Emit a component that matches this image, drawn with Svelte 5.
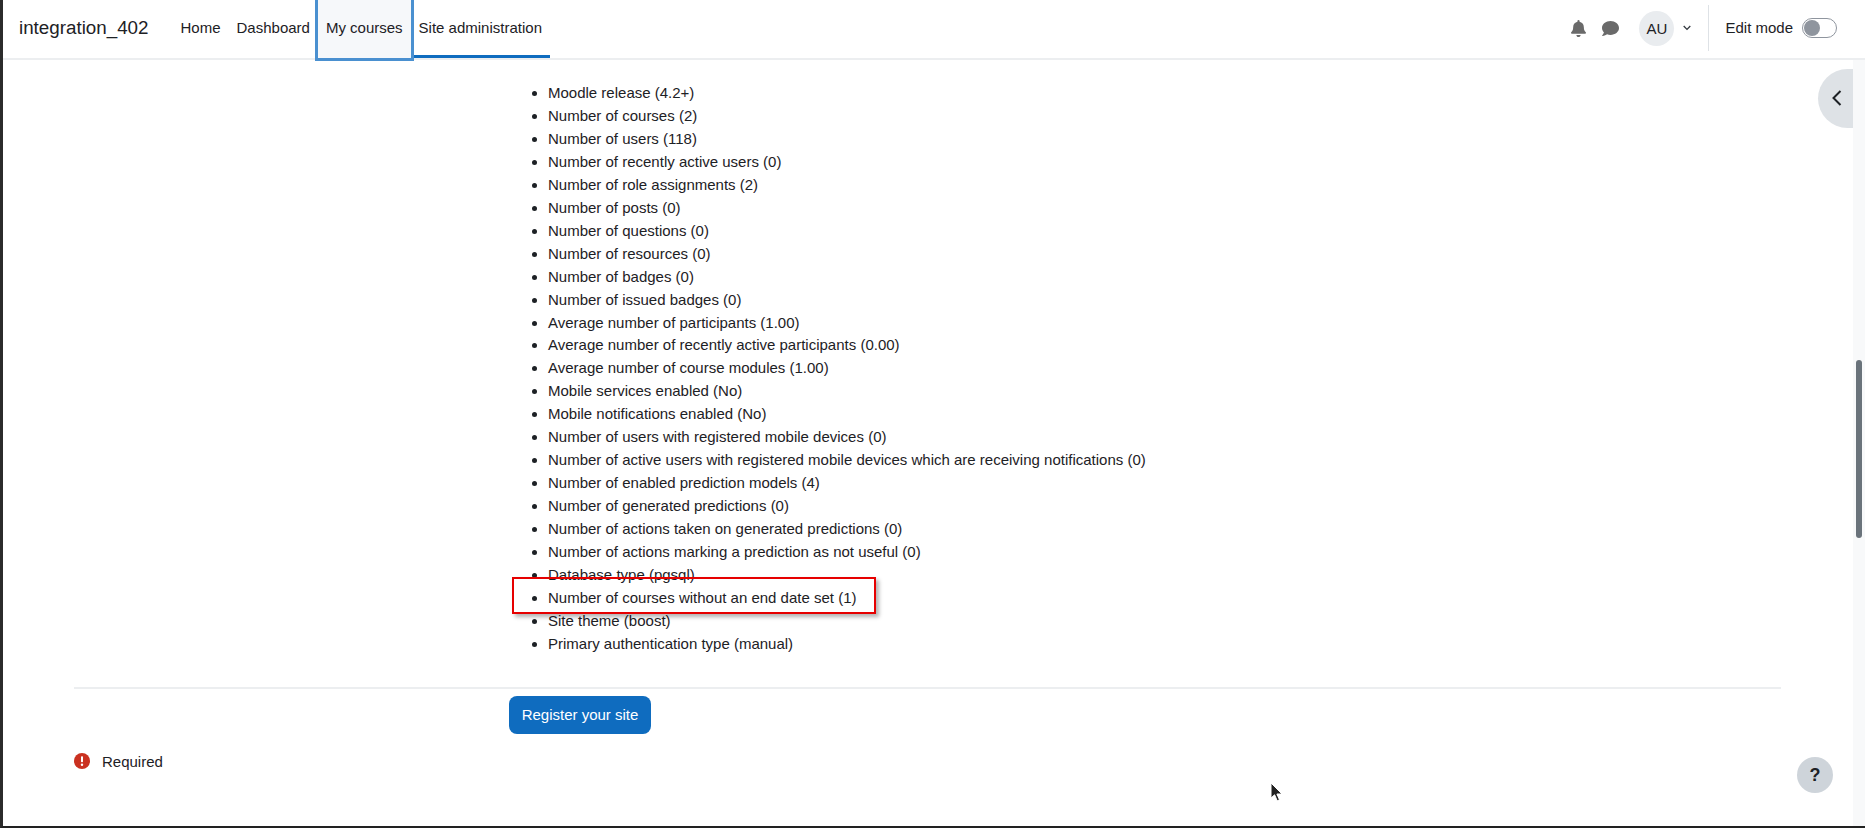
<script lang="ts">
	const items = [
		'Moodle release (4.2+)',
		'Number of courses (2)',
		'Number of users (118)',
		'Number of recently active users (0)',
		'Number of role assignments (2)',
		'Number of posts (0)',
		'Number of questions (0)',
		'Number of resources (0)',
		'Number of badges (0)',
		'Number of issued badges (0)',
		'Average number of participants (1.00)',
		'Average number of recently active participants (0.00)',
		'Average number of course modules (1.00)',
		'Mobile services enabled (No)',
		'Mobile notifications enabled (No)',
		'Number of users with registered mobile devices (0)',
		'Number of active users with registered mobile devices which are receiving notifications (0)',
		'Number of enabled prediction models (4)',
		'Number of generated predictions (0)',
		'Number of actions taken on generated predictions (0)',
		'Number of actions marking a prediction as not useful (0)',
		'Database type (pgsql)',
		'Number of courses without an end date set (1)',
		'Site theme (boost)',
		'Primary authentication type (manual)'
	];
	const links = ['Home', 'Dashboard', 'My courses', 'Site administration'];
</script>

<div class="screen">
	<header class="navbar">
		<span class="brand">integration_402</span>
		<nav class="links">
			{#each links as link}
				<span class="link" class:focused={link === 'My courses'} class:active={link === 'Site administration'}>{link}</span>
			{/each}
		</nav>
		<div class="right">
			<svg class="icon bell" width="15" height="17" viewBox="0 0 448 512"><path d="M224 512c35 0 64-29 64-64H160c0 35 29 64 64 64zm215-150c-19-21-55-52-55-154 0-78-54-140-128-155V32a32 32 0 1 0-64 0v21C118 68 64 130 64 208c0 102-36 133-55 154-6 6-9 14-9 22 0 16 13 32 32 32h384c19 0 32-16 32-32 0-8-3-16-9-22z"/></svg>
			<svg class="icon chat" width="17" height="17" viewBox="0 0 512 512"><path d="M256 32C115 32 0 125 0 240c0 50 22 95 58 131-13 50-54 94-55 95-2 2-3 6-2 9 2 3 4 5 8 5 67 0 117-32 143-52 32 12 67 20 104 20 141 0 256-93 256-208S397 32 256 32z"/></svg>
			<span class="avatar">AU</span>
			<svg class="caret" width="8" height="6" viewBox="0 0 8 6"><path d="M.7 1 4 4.4 7.3 1" /></svg>
			<span class="divider"></span>
			<span class="edit">Edit mode</span>
			<span class="switch"><span class="knob"></span></span>
		</div>
	</header>

	<main class="page">
		<div class="content">
			<ul class="stats">
				{#each items as item}
					<li>{item}</li>
				{/each}
			</ul>
			<hr />
			<div class="actions">
				<button class="primary">Register your site</button>
			</div>
			<div class="required">
				<svg width="16" height="16" viewBox="0 0 16 16"><circle cx="8" cy="8" r="8" fill="#ca3120" /><rect x="7" y="3.2" width="2" height="6" rx="0.8" fill="#fff" /><circle cx="8" cy="11.7" r="1.2" fill="#fff" /></svg>
				<span>Required</span>
			</div>
		</div>
		<div class="gutter"><span class="thumb"></span></div>
	</main>

	<div class="highlight"></div>
	<button class="drawer" aria-label="Open drawer">
		<svg width="10" height="16" viewBox="0 0 10 16"><path d="M8.5 1 1.5 8l7 7" /></svg>
	</button>
	<button class="help">?</button>
	<svg class="cursor" width="14" height="20" viewBox="0 0 14 20"><path d="M1 1v15l3.6-3.2 2.6 6 2.3-1-2.6-5.8H12z" /></svg>
</div>

<style>
	:global(body) {
		margin: 0;
		overflow: hidden;
	}

	.screen {
		position: relative;
		width: 1865px;
		height: 828px;
		overflow: hidden;
		background: #fff;
		box-sizing: border-box;
		border-left: 3px solid #2b2b2b;
		border-bottom: 2px solid #222;
		font-family: 'Liberation Sans', Arial, sans-serif;
		font-size: 15px;
		color: #1d2125;
	}

	.navbar {
		height: 58px;
		display: flex;
		align-items: center;
		padding: 0 28px 0 16px;
		background: #fff;
		border-bottom: 2px solid #eceef0;
		position: relative;
		z-index: 2;
	}

	.brand {
		font-size: 18.8px;
		margin-right: 24px;
		padding-bottom: 2px;
	}

	.links {
		display: flex;
		align-self: stretch;
	}

	.link {
		display: flex;
		align-items: center;
		padding: 0 8px 3px;
		height: 58px;
		box-sizing: border-box;
	}

	.focused {
		position: relative;
		z-index: 1;
		background: #f6f8fa;
		outline: 3px solid #4a90d0;
	}

	.active {
		border-bottom: 3px solid #0f6cbf;
		padding-bottom: 0;
	}

	.right {
		margin-left: auto;
		display: flex;
		align-items: center;
		padding-bottom: 2px;
	}

	.icon {
		fill: #6a6a6a;
	}

	.bell {
		margin-right: 16px;
	}

	.chat {
		margin-right: 20px;
	}

	.avatar {
		width: 35px;
		height: 35px;
		border-radius: 50%;
		background: #e9ecef;
		display: flex;
		align-items: center;
		justify-content: center;
		margin-right: 9px;
	}

	.caret {
		fill: none;
		stroke: #343a40;
		stroke-width: 1.3;
		margin-right: 17px;
	}

	.divider {
		width: 1px;
		height: 46px;
		background: #dee2e6;
		margin-right: 16px;
	}

	.edit {
		padding-bottom: 2px;
	}

	.switch {
		width: 35px;
		height: 20px;
		margin-left: 9px;
		border: 1px solid #8f959e;
		border-radius: 10px;
		box-sizing: border-box;
		display: flex;
		align-items: center;
		padding-left: 1px;
	}

	.knob {
		width: 16px;
		height: 16px;
		border-radius: 50%;
		background: #8f959e;
	}

	.page {
		display: flex;
		height: 766px;
	}

	.content {
		flex: 1;
		padding: 22px 72px 0 71px;
		background: #fff;
	}

	.stats {
		margin: 0 0 31px;
		padding: 0 0 0 474px;
		line-height: 22.95px;
		font-size: 15px;
	}

	hr {
		border: none;
		border-top: 2px solid #eceef0;
		margin: 0;
	}

	.actions {
		display: flex;
		padding: 7px 0 0 435px;
	}

	.primary {
		height: 38px;
		width: 142px;
		padding: 0;
		border: none;
		border-radius: 8px;
		background: #0f6cbf;
		color: #fff;
		font: inherit;
	}

	.required {
		display: flex;
		align-items: center;
		gap: 12px;
		margin-top: 19px;
	}

	.gutter {
		width: 12px;
		background: #f8f9fa;
		padding-left: 3px;
		box-sizing: border-box;
	}

	.thumb {
		display: block;
		width: 6px;
		height: 178px;
		margin-top: 300px;
		border-radius: 3px;
		background: #6a737b;
	}

	.highlight {
		position: absolute;
		left: 509px;
		top: 577px;
		width: 360px;
		height: 33px;
		border: 2px solid #e60000;
		box-shadow: 3px 3px 4px rgba(0, 0, 0, 0.3);
	}

	.drawer {
		position: absolute;
		right: 12px;
		top: 69px;
		width: 35px;
		height: 59px;
		border: none;
		padding: 0 0 2px 2px;
		background: #dee2e6;
		border-radius: 30px 0 0 30px;
		display: flex;
		align-items: center;
		justify-content: center;
	}

	.drawer svg {
		fill: none;
		stroke: #1d2125;
		stroke-width: 2;
	}

	.help {
		position: absolute;
		left: 1794px;
		top: 757px;
		width: 36px;
		height: 36px;
		border: none;
		padding: 0;
		border-radius: 50%;
		background: #ced4da;
		color: #1d2125;
		font: bold 18px 'Liberation Sans', Arial, sans-serif;
	}

	.cursor {
		position: absolute;
		left: 1267px;
		top: 782px;
		fill: #222;
		stroke: #fff;
		stroke-width: 1;
	}
</style>
